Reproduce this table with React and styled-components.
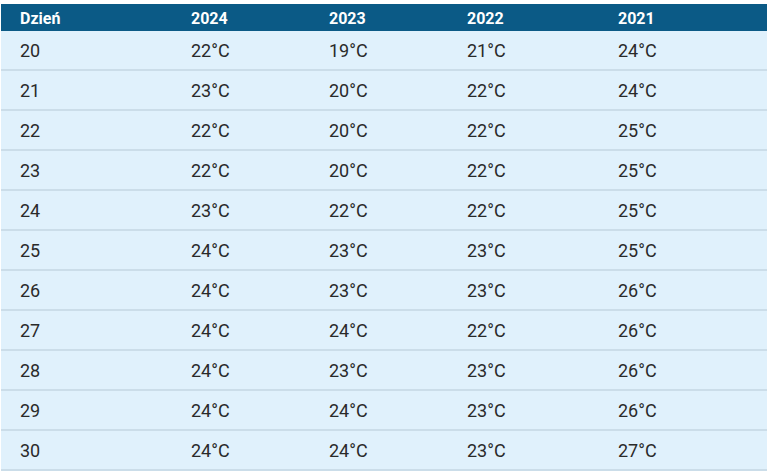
import React from "react";
import styled, { createGlobalStyle } from "styled-components";

const Global = createGlobalStyle`
  html, body { margin: 0; padding: 0; background: #ffffff; }
  body { font-family: Roboto, "Noto Sans", Arial, sans-serif; }
`;

const Wrap = styled.div`
  padding: 4px 6px 0 1px;
`;

const Table = styled.div`
  display: flex;
  flex-direction: column;
  width: 766px;
`;

const cols = "171px 138px 138px 151px 1fr";

const HeadRow = styled.div`
  display: grid;
  grid-template-columns: ${cols};
  height: 27px;
  align-items: center;
  background: #0b5a86;
  color: #ffffff;
  font-weight: 700;
  font-size: 16px;
`;

const Row = styled.div`
  display: grid;
  grid-template-columns: ${cols};
  height: 38px;
  align-items: center;
  background: #e0f1fc;
  border-bottom: 2px solid #cbdde9;
  color: #2a2a2a;
  font-size: 18px;
`;

const Cell = styled.div`
  padding-left: 19px;
  padding-top: ${(p) => (p.$head ? "1px" : "1px")};
`;

const years = ["2024", "2023", "2022", "2021"];
const data = [
  ["20", 22, 19, 21, 24],
  ["21", 23, 20, 22, 24],
  ["22", 22, 20, 22, 25],
  ["23", 22, 20, 22, 25],
  ["24", 23, 22, 22, 25],
  ["25", 24, 23, 23, 25],
  ["26", 24, 23, 23, 26],
  ["27", 24, 24, 22, 26],
  ["28", 24, 23, 23, 26],
  ["29", 24, 24, 23, 26],
  ["30", 24, 24, 23, 27],
];

export default function App() {
  return (
    <>
      <Global />
      <Wrap>
        <Table>
          <HeadRow>
            <Cell $head>Dzień</Cell>
            {years.map((y) => (
              <Cell $head key={y}>{y}</Cell>
            ))}
          </HeadRow>
          {data.map(([d, ...t]) => (
            <Row key={d}>
              <Cell>{d}</Cell>
              {t.map((v, i) => (
                <Cell key={i}>{v}°C</Cell>
              ))}
            </Row>
          ))}
        </Table>
      </Wrap>
    </>
  );
}
